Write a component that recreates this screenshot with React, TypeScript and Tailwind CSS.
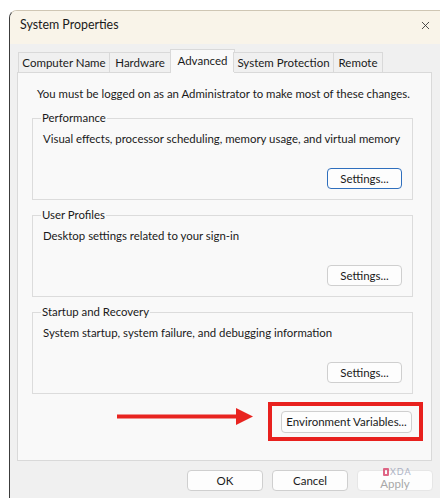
import { X } from 'lucide-react';

const font = { fontFamily: 'Lato, "Liberation Sans", sans-serif' };

function WinButton({ label, focused, disabled, className }: { label: string; focused?: boolean; disabled?: boolean; className?: string }) {
  return (
    <button
      className={`h-[21px] whitespace-nowrap rounded-[4px] bg-[#fdfdfd] text-[11.5px] leading-none ${
        focused
          ? 'border-[1.5px] border-[#2f6fbd] text-[#1a1a1a]'
          : disabled
          ? 'border border-[#e6e6e6] bg-[#f7f7f7] text-[#a8a8a8]'
          : 'border border-[#cfcfcf] text-[#1a1a1a]'
      } ${className ?? ''}`}
    >
      {label}
    </button>
  );
}

function GroupBox({ title, text, focused }: { title: string; text: string; focused?: boolean }) {
  return (
    <fieldset className="min-w-0 border border-[#dcdcdc] pl-[10px] pr-[10px] pb-[10px]">
      <legend className="-ml-[2px] px-[1px] text-[11.4px] leading-[16px] text-[#1a1a1a] whitespace-nowrap">{title}</legend>
      <p className="mt-[5px] text-[11.4px] leading-[16px] text-[#1a1a1a] whitespace-nowrap">{text}</p>
      <div className="mt-[21px] flex justify-end">
        <WinButton label="Settings..." focused={focused} className="w-[75px]" />
      </div>
    </fieldset>
  );
}

export default function App() {
  const tabs = ['Computer Name', 'Hardware', 'Advanced', 'System Protection', 'Remote'];
  const tabWidths = ['w-[92px]', 'w-[62px]', 'w-[65px]', 'w-[101px]', 'w-[50px]'];

  return (
    <div className="w-[440px] h-[500px] overflow-hidden bg-white" style={font}>
      <div className="ml-[9px] mt-[10px] h-[488px] flex flex-col rounded-tl-[8px] border-l border-t border-l-[#3c3c3c] border-t-[#cfc6b4] overflow-hidden">
        {/* Title bar */}
        <div className="h-[33px] shrink-0 bg-[#f9f4e9] flex items-center justify-between pl-[10px] pr-[8px] pb-[4px]">
          <span className="text-[12.4px] text-[#1a1a1a]">System Properties</span>
          <X className="w-[13px] h-[13px] text-[#333]" strokeWidth={1.6} />
        </div>

        {/* Body */}
        <div className="flex-1 bg-[#f0f0f0] pl-[7px] pr-[8px] flex flex-col">
          {/* Tabs */}
          <div className="mt-[5px] h-[23px] flex items-end pl-[1px] relative z-10">
            {tabs.map((tab, i) => {
              const active = tab === 'Advanced';
              return (
                <div
                  key={tab}
                  className={`${tabWidths[i]} whitespace-nowrap flex items-center justify-center text-[11.5px] text-[#1a1a1a] border border-[#d9d9d9] ${
                    active
                      ? 'h-[24px] -mb-[1px] bg-[#f9f9f9] border-b-0 -mx-[1px] pb-[2px]'
                      : 'h-[20px] bg-[#f0f0f0] border-b-0 -ml-[1px] first:ml-0'
                  }`}
                >
                  {tab}
                </div>
              );
            })}
          </div>

          {/* Tab panel */}
          <div className="h-[389px] border border-[#d9d9d9] bg-[#f9f9f9] flex flex-col">
            <p className="mt-[13px] pl-[19px] text-[11.4px] leading-[16px] text-[#1a1a1a] whitespace-nowrap">
              You must be logged on as an Administrator to make most of these changes.
            </p>
            <div className="mt-[8px] ml-[14px] w-[381px] flex flex-col gap-[7px]">
              <GroupBox title="Performance" text="Visual effects, processor scheduling, memory usage, and virtual memory" focused />
              <GroupBox title="User Profiles" text="Desktop settings related to your sign-in" />
              <GroupBox title="Startup and Recovery" text="System startup, system failure, and debugging information" />
            </div>

            {/* Environment variables row with annotation */}
            <div className="mt-[8px] flex items-start justify-end pr-[8px]">
              <svg width="136" height="17" viewBox="0 0 136 17" className="mt-[6px] mr-[15px]">
                <rect x="0" y="6.5" width="122" height="4" fill="#e82420" />
                <polygon points="119,0 136,8.5 119,17" fill="#e82420" />
              </svg>
              <div className="w-[155px] h-[39px] border-[4px] border-[#e8211e] flex items-center pl-[9px]">
                <WinButton label="Environment Variables..." className="w-[131px] h-[22px]" />
              </div>
            </div>
          </div>

          {/* Dialog buttons */}
          <div className="mt-[9px] flex justify-end gap-[9px] -mr-[1px]">
            <WinButton label="OK" className="w-[76px]" />
            <WinButton label="Cancel" className="w-[76px]" />
            <div className="relative">
              <WinButton label="Apply" disabled className="w-[76px] pt-[6px]" />
              <div className="absolute left-[26px] -top-[3px] flex items-center gap-[1px] opacity-80">
                <div className="w-[6px] h-[8px] border-[2px] border-[#d9436a] rounded-[1px]" />
                <span className="text-[9px] leading-none tracking-[1px] text-[#9aa2b8]">XDA</span>
              </div>
            </div>
          </div>
        </div>
      </div>
    </div>
  );
}
